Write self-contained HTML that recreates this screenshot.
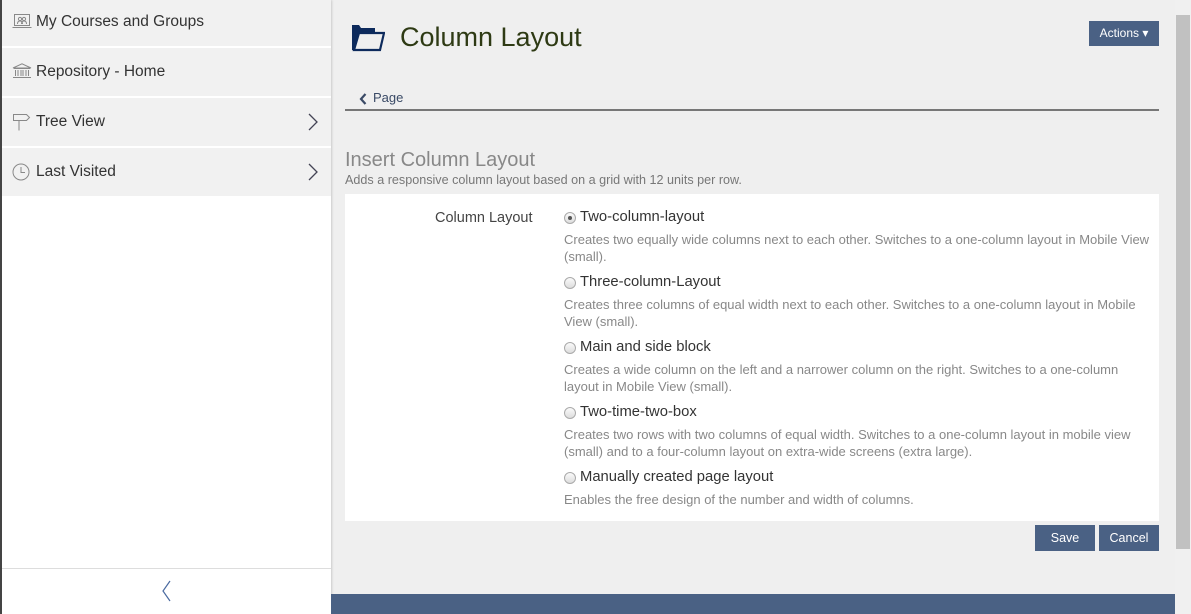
<!DOCTYPE html>
<html><head><meta charset="utf-8"><style>
*{margin:0;padding:0;box-sizing:border-box}
body{width:1191px;height:614px;overflow:hidden;background:#efefef;font-family:"Liberation Sans",sans-serif;position:relative}
.sb{position:absolute;left:0;top:0;width:331px;height:614px;background:#fff;border-left:2px solid #444;box-shadow:1px 0 2px rgba(0,0,0,.15)}
.item{position:absolute;left:0;width:329px;height:48px;background:#f1f1f1;color:#333;font-size:15.5px;line-height:48px;padding-left:34px}
.item svg.ic{position:absolute;left:10px;top:15px}
.item .chev{position:absolute;right:12px;top:14px}
.main{position:absolute;left:331px;top:0;width:844px;height:614px}
h1{position:absolute;left:69px;top:22px;font-weight:normal;font-size:27px;color:#2e3a14}
.act{position:absolute;left:758px;top:21px;width:70px;height:25px;background:#4a6184;color:#fff;font-size:12px;line-height:25px;text-align:center}
.crumb{position:absolute;left:42px;top:90px;font-size:13px;color:#3a4a66}
.hr{position:absolute;left:14px;top:109px;width:814px;height:2px;background:#777}
.t1{position:absolute;left:14px;top:149px;font-size:20px;color:#888}
.t2{position:absolute;left:14px;top:173px;font-size:12.6px;color:#777}
.card{position:absolute;left:14px;top:194px;width:814px;height:327px;background:#fff}
.lbl{position:absolute;left:90px;top:16px;font-size:14.5px;color:#444}
.opt{position:absolute;left:219px;width:590px}
.opt .r{position:absolute;left:0;top:3px;width:12px;height:12px;border:1px solid #aaa;border-radius:50%;background:linear-gradient(#fafafa,#ddd)}
.opt .r.on::after{content:"";position:absolute;left:3px;top:3px;width:4px;height:4px;border-radius:50%;background:#555}
.opt .n{position:absolute;left:16px;top:0;font-size:14.8px;color:#333;white-space:nowrap}
.opt .d{position:absolute;left:0;top:22px;font-size:13px;line-height:17px;color:#888;width:590px}
.btn{position:absolute;top:525px;width:60px;height:26px;background:#4a6184;color:#fff;font-size:12.5px;line-height:26px;text-align:center}
.foot{position:absolute;left:331px;top:594px;width:844px;height:20px;background:#4a6184}
.scr{position:absolute;left:1175px;top:0;width:16px;height:614px;background:#f0f0f0}
.thumb{position:absolute;left:1px;top:15px;width:14px;height:534px;background:#c1c1c1}
</style></head><body>
<div class="sb">
 <div class="item" style="top:-2px">
  <svg class="ic" width="20" height="16" viewBox="0 0 20 16" fill="none" stroke="#888" stroke-width="1"><rect x="2.5" y="1.5" width="15" height="11"/><path d="M0.5 14.5h19"/><circle cx="8" cy="6" r="1.6"/><circle cx="12" cy="6" r="1.6"/><path d="M5.5 11c0-2 1-3 2.5-3s2.5 1 2.5 3M9.5 11c0-2 1-3 2.5-3s2.5 1 2.5 3"/></svg>
  My Courses and Groups</div>
 <div class="item" style="top:48px">
  <svg class="ic" width="20" height="16" viewBox="0 0 20 16" fill="none" stroke="#888" stroke-width="1"><path d="M1 5L10 0.8 19 5zM2 5.5h16M3.5 7v6M6 7v6M9 7v6M11 7v6M14 7v6M16.5 7v6M1 14.5h18"/></svg>
  Repository - Home</div>
 <div class="item" style="top:98px">
  <svg class="ic" width="20" height="18" viewBox="0 0 20 18" fill="none" stroke="#888" stroke-width="1"><path d="M1.5 1.5h13l3 3-3 3h-13zM7 7.5v10"/></svg>
  Tree View
  <svg class="chev" width="12" height="20" viewBox="0 0 12 20" fill="none" stroke="#445" stroke-width="1.3"><path d="M2 2l8 8-8 8"/></svg></div>
 <div class="item" style="top:148px">
  <svg class="ic" width="20" height="20" viewBox="0 0 20 20" fill="none" stroke="#888" stroke-width="1"><circle cx="9" cy="9" r="8"/><path d="M9 4v5.5h4"/></svg>
  Last Visited
  <svg class="chev" width="12" height="20" viewBox="0 0 12 20" fill="none" stroke="#445" stroke-width="1.3"><path d="M2 2l8 8-8 8"/></svg></div>
 <div style="position:absolute;left:0;top:568px;width:329px;height:1px;background:#ddd"></div>
 <svg style="position:absolute;left:158px;top:580px" width="12" height="22" viewBox="0 0 12 22" fill="none" stroke="#4a6aa0" stroke-width="1.2"><path d="M10 1L3 11l7 10"/></svg>
</div>
<div class="main">
 <svg style="position:absolute;left:20px;top:24px" width="34" height="28" viewBox="0 0 34 28"><path d="M1 1h7l2 3h14v4H8L3 26H1z" fill="#0d2a5c"/><path d="M8 9h25l-4 17H3z" fill="none" stroke="#0d2a5c" stroke-width="2.2"/></svg>
 <h1>Column Layout</h1>
 <div class="act">Actions ▾</div>
 <svg style="position:absolute;left:28px;top:93px" width="8" height="12" viewBox="0 0 8 12" fill="none" stroke="#3a4a66" stroke-width="2.2"><path d="M6.5 1L2 6l4.5 5"/></svg>
 <div class="crumb">Page</div>
 <div class="hr"></div>
 <div class="t1">Insert Column Layout</div>
 <div class="t2">Adds a responsive column layout based on a grid with 12 units per row.</div>
 <div class="card">
  <div class="lbl">Column Layout</div>
  <div class="opt" style="top:15px"><div class="r on"></div><div class="n">Two-column-layout</div><div class="d">Creates two equally wide columns next to each other. Switches to a one-column layout in Mobile View (small).</div></div>
  <div class="opt" style="top:80px"><div class="r"></div><div class="n">Three-column-Layout</div><div class="d">Creates three columns of equal width next to each other. Switches to a one-column layout in Mobile View (small).</div></div>
  <div class="opt" style="top:145px"><div class="r"></div><div class="n">Main and side block</div><div class="d">Creates a wide column on the left and a narrower column on the right. Switches to a one-column layout in Mobile View (small).</div></div>
  <div class="opt" style="top:210px"><div class="r"></div><div class="n">Two-time-two-box</div><div class="d">Creates two rows with two columns of equal width. Switches to a one-column layout in mobile view (small) and to a four-column layout on extra-wide screens (extra large).</div></div>
  <div class="opt" style="top:275px"><div class="r"></div><div class="n">Manually created page layout</div><div class="d">Enables the free design of the number and width of columns.</div></div>
 </div>
</div>
<div class="btn" style="left:1035px">Save</div>
<div class="btn" style="left:1099px">Cancel</div>
<div class="foot"></div>
<div class="scr"><div class="thumb"></div></div>
</body></html>
